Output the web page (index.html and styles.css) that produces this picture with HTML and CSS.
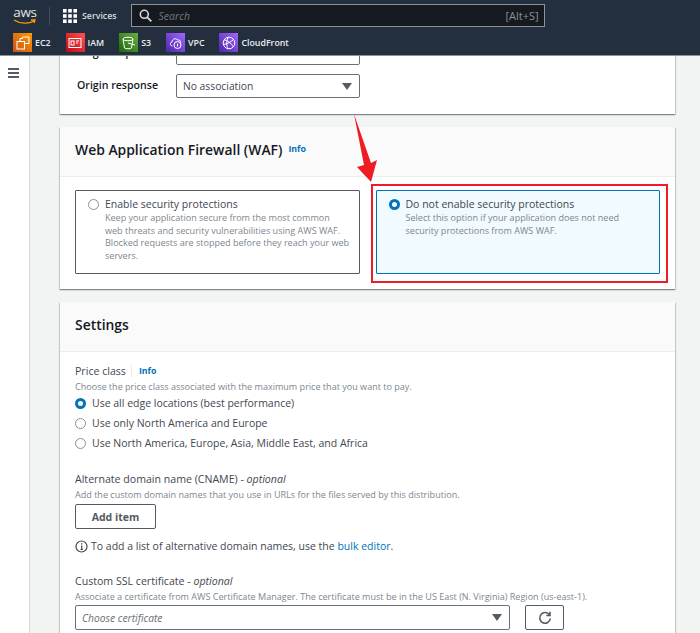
FILE: index.html
```html
<!DOCTYPE html>
<html lang="en">
<head>
  <meta charset="UTF-8">
  <title>Create distribution</title>
  <link rel="stylesheet" href="styles.css">
</head>
<body>

<header class="topbar">
  <div class="nav-row">
    <div class="logo">
      <span class="logo-text">aws</span>
      <svg class="logo-smile" width="24" height="6" viewBox="0 0 24 6"><path d="M1 1c6 4 15 4 20 1M18 1h4l-1 3" fill="none" stroke="#f90" stroke-width="1.3"/></svg>
    </div>
    <div class="nav-sep"></div>
    <div class="services">
      <svg width="14" height="14" viewBox="0 0 14 14" fill="#fff">
        <rect width="3.6" height="3.6"/><rect x="5.2" width="3.6" height="3.6"/><rect x="10.4" width="3.6" height="3.6"/>
        <rect y="5.2" width="3.6" height="3.6"/><rect x="5.2" y="5.2" width="3.6" height="3.6"/><rect x="10.4" y="5.2" width="3.6" height="3.6"/>
        <rect y="10.4" width="3.6" height="3.6"/><rect x="5.2" y="10.4" width="3.6" height="3.6"/><rect x="10.4" y="10.4" width="3.6" height="3.6"/>
      </svg>
      <span>Services</span>
    </div>
    <div class="search">
      <svg width="13" height="13" viewBox="0 0 13 13"><circle cx="5.3" cy="5.3" r="4" fill="none" stroke="#d5dbdb" stroke-width="1.6"/><path d="M8.3 8.3l4 4" stroke="#d5dbdb" stroke-width="1.8"/></svg>
      <span class="search-text">Search</span>
      <span class="search-key">[Alt+S]</span>
    </div>
  </div>
  <div class="fav-row">
    <div class="fav">
      <span class="fav-icon ec2"><svg width="14" height="14" viewBox="0 0 14 14" fill="none" stroke="#fff"><rect x="1" y="5.5" width="7.5" height="7.5"/><path d="M4 5.5V2.500h2.500M6.500 2.500V1H13v6.500H8.500"/></svg></span>
      <span>EC2</span>
    </div>
    <div class="fav">
      <span class="fav-icon iam"><svg width="14" height="14" viewBox="0 0 14 14" fill="none" stroke="#fff"><rect x="1" y="2.500" width="12" height="9"/><rect x="3" y="5" width="3" height="4"/><path d="M8 5h3M8 7h2"/></svg></span>
      <span>IAM</span>
    </div>
    <div class="fav">
      <span class="fav-icon s3"><svg width="14" height="14" viewBox="0 0 14 14" fill="none" stroke="#fff"><ellipse cx="6" cy="3" rx="5" ry="1.800"/><path d="M1 3l1.500 9c1 1 6 1 7 0L11 3M6 7l7 2"/></svg></span>
      <span>S3</span>
    </div>
    <div class="fav">
      <span class="fav-icon vpc"><svg width="14" height="14" viewBox="0 0 14 14" fill="none" stroke="#fff"><path d="M3.500 10C1 10 .5 6.500 3 6c0-3 4-4.500 5.500-2 2-.5 3.500 1 3 2.500"/><circle cx="8.500" cy="9" r="3.500"/><path d="M8.500 7.500v3"/></svg></span>
      <span>VPC</span>
    </div>
    <div class="fav">
      <span class="fav-icon cf"><svg width="14" height="14" viewBox="0 0 14 14" fill="none" stroke="#fff"><circle cx="7" cy="7" r="5.800"/><path d="M2 4c3 0 7 3 9.500 7M6 1.500C4 6 4.500 10 6 12.500M1.500 8.500C5 8 9 6 11.500 3.500"/></svg></span>
      <span>CloudFront</span>
    </div>
  </div>
</header>

<div class="layout">
  <aside class="sidebar">
    <div class="burger"><span></span><span></span><span></span></div>
  </aside>

  <main class="content">
    <section class="card card-origin">
      <div class="assoc-row">
        <span class="assoc-label">Origin request</span>
        <div class="select"></div>
      </div>
      <div class="assoc-row">
        <span class="assoc-label">Origin response</span>
        <div class="select"><span>No association</span><i class="caret"></i></div>
      </div>
    </section>

    <section class="card card-waf">
      <div class="card-head">
        <h2>Web Application Firewall (WAF)</h2>
        <a class="info">Info</a>
      </div>
      <div class="tiles">
        <div class="tile">
          <span class="radio"></span>
          <div>
            <div class="tile-title">Enable security protections</div>
            <p class="tile-desc">Keep your application secure from the most common web threats and security vulnerabilities using AWS WAF. Blocked requests are stopped before they reach your web servers.</p>
          </div>
        </div>
        <div class="tile tile-on">
          <span class="radio radio-on"></span>
          <div>
            <div class="tile-title">Do not enable security protections</div>
            <p class="tile-desc">Select this option if your application does not need security protections from AWS WAF.</p>
          </div>
        </div>
      </div>
    </section>

    <section class="card card-settings">
      <div class="card-head">
        <h2>Settings</h2>
      </div>
      <div class="settings-body">
        <div class="field-price">
          <div class="label-row"><span class="label">Price class</span><a class="info info-sep">Info</a></div>
          <p class="hint">Choose the price class associated with the maximum price that you want to pay.</p>
          <div class="option"><span class="radio radio-on"></span>Use all edge locations (best performance)</div>
          <div class="option"><span class="radio"></span>Use only North America and Europe</div>
          <div class="option"><span class="radio"></span>Use North America, Europe, Asia, Middle East, and Africa</div>
        </div>

        <div class="field-cname">
          <div class="label">Alternate domain name (CNAME) - <em>optional</em></div>
          <p class="hint">Add the custom domain names that you use in URLs for the files served by this distribution.</p>
          <button class="btn">Add item</button>
          <div class="note">
            <svg width="13" height="13" viewBox="0 0 13 13" fill="none" stroke="#414750"><circle cx="6.500" cy="6.500" r="5.500" stroke-width="1.200"/><path d="M6.700 5.500v4M5.500 9.500h2.400M6.700 3.200v1.200" stroke-width="1.200"/></svg>
            <span>To add a list of alternative domain names, use the <a class="link">bulk editor</a>.</span>
          </div>
        </div>

        <div class="field-ssl">
          <div class="label">Custom SSL certificate - <em>optional</em></div>
          <p class="hint">Associate a certificate from AWS Certificate Manager. The certificate must be in the US East (N. Virginia) Region (us-east-1).</p>
          <div class="ssl-row">
            <div class="select select-wide"><em>Choose certificate</em><i class="caret"></i></div>
            <button class="btn btn-icon">
              <svg width="14" height="14" viewBox="0 0 14 14" fill="none" stroke="#545b64" stroke-width="1.600"><path d="M11.500 4A5.300 5.300 0 1 0 12.300 7.500"/><path d="M12 .8V4.500H8.300"/></svg>
            </button>
          </div>
        </div>
      </div>
    </section>
  </main>
</div>

<!-- red marks drawn on top of the screenshot -->
<div class="mark-box"></div>
<svg class="mark-arrow" width="30" height="74" viewBox="0 0 30 74"><polygon points="4,0 21,49 27,46 21,68 7,53 14,51" fill="#ee1c25"/></svg>

</body>
</html>
```

FILE: styles.css
```css
html, body {
  margin: 0;
  height: 633px;
  overflow: hidden;
}
body {
  font-family: "Open Sans", sans-serif;
  background-color: #f2f3f3;
  color: #16191f;
  position: relative;
}
p {
  margin: 0;
}
.topbar {
  height: 56px;
  box-sizing: border-box;
  background-color: #232f3e;
  border-bottom: 1px solid #879596;
  color: #fff;
  position: relative;
  z-index: 2;
}
.nav-row {
  height: 31px;
  display: flex;
  align-items: center;
  padding-left: 13px;
}
.logo {
  width: 24px;
  height: 24px;
  display: flex;
  flex-direction: column;
  align-items: center;
}
.logo-text {
  font-size: 13.5px;
  line-height: 15px;
  letter-spacing: -0.3px;
  margin-top: 1px;
  color: #e0e2e4;
}
.logo-smile {
  margin-top: -1px;
}
.nav-sep {
  width: 1px;
  height: 18px;
  background-color: #414d5c;
  margin-left: 12px;
}
.services {
  display: flex;
  align-items: center;
  gap: 5px;
  margin-left: 13px;
  font-size: 8.800px;
  font-weight: 600;
  color: #d5dbdb;
}
.search {
  width: 414px;
  height: 23px;
  box-sizing: border-box;
  margin-left: 14px;
  border: 1px solid #879596;
  background-color: #16191f;
  display: flex;
  align-items: center;
  padding: 0 5px 0 7px;
  color: #879596;
}
.search-text {
  font-style: italic;
  margin-left: 7px;
  font-size: 10.500px;
  color: #6f7b7c;
}
.search-key {
  margin-left: auto;
  font-size: 11px;
}
.fav-row {
  display: flex;
  align-items: center;
  padding: 2px 0 0 13px;
  font-size: 8.800px;
  line-height: 10px;
  font-weight: 600;
  color: #eaeded;
}
.fav {
  display: flex;
  align-items: center;
  gap: 3px;
  margin-right: 15px;
}
.fav-icon {
  width: 19px;
  height: 19px;
  display: flex;
  align-items: center;
  justify-content: center;
}
.ec2 { background: linear-gradient(45deg, #c8511b, #ff9900); }
.iam { background: linear-gradient(45deg, #bd0816, #ff5252); }
.s3 { background: linear-gradient(45deg, #1b660f, #6cae3e); }
.vpc, .cf { background: linear-gradient(45deg, #4d27a8, #a166ff); }

.layout {
  display: flex;
  height: 577px;
  overflow: hidden;
}
.sidebar {
  width: 29px;
  background-color: #fff;
  border-right: 1px solid #d5dbdb;
  padding-top: 12px;
  flex: none;
}
.burger {
  width: 11px;
  margin-left: 8px;
}
.burger span {
  display: block;
  height: 2px;
  background-color: #545b64;
  margin-bottom: 2px;
}
.content {
  width: 615px;
  margin-left: 30px;
}
.card {
  background-color: #fff;
  box-shadow: 0 1px 1px 0 rgba(0, 28, 36, 0.3), 1px 1px 1px 0 rgba(0, 28, 36, 0.15), -1px 1px 1px 0 rgba(0, 28, 36, 0.15);
  margin-bottom: 13px;
}
.card-origin {
  margin-top: -33px;
  height: 91px;
  box-sizing: border-box;
  padding: 18px 0 0 17px;
}
.assoc-row {
  display: flex;
  align-items: center;
  height: 24px;
  margin-bottom: 9px;
}
.assoc-label {
  width: 99px;
  margin-top: -2px;
  font-size: 10.600px;
  line-height: 10px;
  font-weight: 600;
}
.select {
  height: 24px;
  box-sizing: border-box;
  width: 184px;
  border: 1px solid #687078;
  border-radius: 2px;
  background-color: #fff;
  display: flex;
  align-items: center;
  justify-content: space-between;
  padding: 0 7px 0 6px;
  font-size: 10.300px;
  color: #414750;
}
.caret {
  width: 0;
  height: 0;
  border-left: 5px solid transparent;
  border-right: 5px solid transparent;
  border-top: 7px solid #545b64;
}
.card-head {
  height: 50px;
  box-sizing: border-box;
  background-color: #fafafa;
  border-bottom: 1px solid #eaeded;
  display: flex;
  align-items: center;
  gap: 6px;
  padding: 0 0 5px 15px;
}
.card-head h2 {
  margin: 0;
  font-size: 13.900px;
  font-weight: 600;
  color: #16191f;
}
.info {
  color: #0073bb;
  font-size: 8.800px;
  font-weight: 700;
}
.card-waf {
  height: 162px;
}
.tiles {
  display: flex;
  gap: 16px;
  padding: 13px 15px 0;
}
.tile {
  width: 285px;
  height: 84px;
  box-sizing: border-box;
  border: 1px solid #545b64;
  border-radius: 1px;
  display: flex;
  gap: 6px;
  padding: 6px 9px 6px 12px;
}
.tile-on {
  border-color: #0073bb;
  background-color: #f1faff;
}
.tile-title {
  font-size: 10.500px;
  line-height: 14px;
  color: #414750;
}
.tile-desc {
  font-size: 9.050px;
  line-height: 12.500px;
  margin-top: 1px;
  color: #7d878f;
}
.radio {
  width: 9px;
  height: 9px;
  border: 1px solid #879596;
  border-radius: 50%;
  background-color: #fff;
  flex: none;
  margin-top: 2px;
}
.radio-on {
  width: 5px;
  height: 5px;
  border: 3px solid #0073bb;
}
.card-settings {
  height: 331px;
  margin-bottom: 0;
}
.settings-body {
  padding: 11px 15px 0;
}
.label-row {
  display: flex;
  align-items: center;
  height: 16px;
}
.label {
  font-size: 10.600px;
  line-height: 16px;
  color: #414750;
}
.info-sep {
  margin-left: 5px;
  padding-left: 7px;
  border-left: 1px solid #eaeded;
}
.hint {
  font-size: 9.050px;
  line-height: 12px;
  margin-top: 2px;
  color: #7d878f;
}
.option {
  display: flex;
  align-items: center;
  gap: 6px;
  height: 20px;
  font-size: 10.500px;
  color: #414750;
}
.option .radio {
  margin-top: 0;
}
.field-cname {
  margin-top: 18px;
}
.btn {
  height: 25px;
  box-sizing: border-box;
  width: 81px;
  margin-top: 3px;
  background-color: #fff;
  border: 1px solid #545b64;
  border-radius: 2px;
  color: #545b64;
  font-family: inherit;
  font-size: 10.500px;
  font-weight: 700;
}
.note {
  display: flex;
  align-items: center;
  gap: 3px;
  margin-top: 10px;
  font-size: 10.500px;
  color: #414750;
}
.link {
  color: #0073bb;
}
.field-ssl {
  margin-top: 20px;
}
.ssl-row {
  display: flex;
  gap: 15px;
  margin-top: 2px;
}
.select-wide {
  width: 435px;
  height: 25px;
}
.select-wide em {
  color: #687078;
}
.btn-icon {
  width: 39px;
  margin-top: 0;
  display: flex;
  align-items: center;
  justify-content: center;
}
.mark-box {
  position: absolute;
  left: 371px;
  top: 184px;
  width: 293px;
  height: 95px;
  border: 2px solid #ee1c25;
}
.mark-arrow {
  position: absolute;
  left: 350px;
  top: 114px;
}
```
